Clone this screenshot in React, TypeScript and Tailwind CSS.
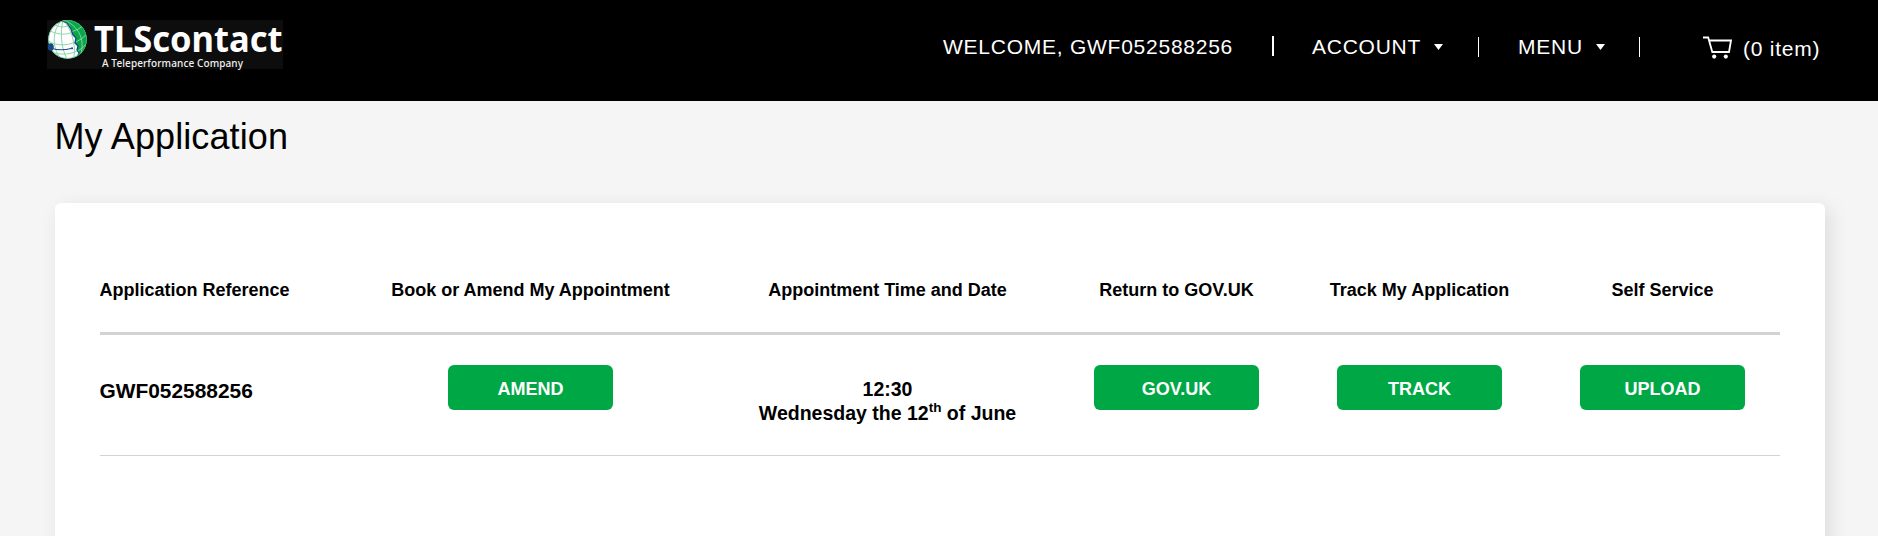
import type { ReactNode } from "react";

const COLUMNS = "grid grid-cols-[245px_371px_343px_235px_251px_235px]";

function Logo() {
  return (
    <svg className="h-[49px] w-[236px] overflow-visible bg-[#0d0d0d] tracking-normal" viewBox="0 0 236 49" role="img" aria-label="TLScontact">
      <defs>
        <clipPath id="globe">
          <circle cx="20.5" cy="19.5" r="19.4" />
        </clipPath>
      </defs>
      <g clipPath="url(#globe)">
        <circle cx="20.5" cy="19.5" r="19.5" fill="#fff" />
        <path d="M13 -1L20 3L24 9L26 15L29 18L28 23L31 26L30 30L32 33L30 40H42V-1Z" fill="#0aa64a" />
        <g fill="none" stroke="#7ed3a2" strokeWidth="0.9">
          <path d="M15 0C5 10 5 27 13 38M16 0C13 12 14 28 20 39M16 0C24 8 29 24 27 37" />
          <path d="M3 11C12 15 20 15 26 12M1 21C10 26 20 26 28 22M4 32C13 35 22 35 30 31M8 5C14 8 19 7 23 5" />
        </g>
        <g fill="none" stroke="#8fd9ae" strokeWidth="0.9">
          <path d="M17 0C31 6 38 18 34 34M24 12Q31 10 36 6M29 22Q35 19 39 15M31 31Q36 28 39 24" />
        </g>
        <path d="M15 1L20 3L24 9L26 15L29 18L28 23L31 26L30 30L32 33L30 38" fill="none" stroke="#164a87" strokeWidth="1.3" strokeLinejoin="round" />
        <circle cx="20.5" cy="19.5" r="19" fill="none" stroke="#3cb56d" strokeWidth="0.8" />
      </g>
      <path d="M5 28.5Q14 31 24 28.5" fill="none" stroke="#164a87" strokeWidth="1.1" />
      <ellipse cx="3.8" cy="27" rx="3" ry="3.8" fill="#164a87" />
      <circle cx="25" cy="28.3" r="1.1" fill="#164a87" />
      <text x="47" y="32" textLength="188.5" lengthAdjust="spacingAndGlyphs" fill="#fff" className="font-['Noto_Sans',sans-serif] text-[35px] font-bold">
        TLScontact
      </text>
      <text x="55" y="46.5" textLength="141" lengthAdjust="spacing" fill="#f0f0f0" className="font-['Noto_Sans',sans-serif] text-[10px] font-medium">
        A Teleperformance Company
      </text>
    </svg>
  );
}

function Caret() {
  return (
    <svg className="ml-[13px] h-[6px] w-[9px]" viewBox="0 0 9 6" fill="#fff">
      <path d="M0 0H9L4.5 6Z" />
    </svg>
  );
}

function CartIcon() {
  return (
    <svg className="h-[23px] w-[29px]" viewBox="0 0 29 23">
      <path d="M0 1.5H5.2L9.3 16H26L28 4.5H6.3" fill="none" stroke="#fff" strokeWidth="1.8" />
      <circle cx="11.2" cy="20.6" r="2.1" fill="#fff" />
      <circle cx="22.8" cy="20.6" r="2.1" fill="#fff" />
    </svg>
  );
}

function ActionButton({ children }: { children: ReactNode }) {
  return (
    <button className="h-[45px] w-[165px] rounded-[6px] bg-[#00a845] pt-[2px] text-[18px] leading-none font-bold text-white">
      {children}
    </button>
  );
}

export default function App() {
  return (
    <div className="flex h-[536px] flex-col overflow-hidden bg-[#f5f5f5] font-['Liberation_Sans',Arial,sans-serif] text-black">
      <header className="flex h-[101px] shrink-0 items-start bg-black pt-5 pl-[47px] text-[21px] leading-6 tracking-[0.75px] text-white">
        <Logo />
        <nav className="mt-[15px] ml-[660px] flex h-6 items-center whitespace-nowrap">
          <span className="w-[329px]">WELCOME, GWF052588256</span>
          <span className="-mt-[2px] h-5 w-[2px] bg-white" />
          <a className="ml-[38px] flex w-[166px] items-center">ACCOUNT<Caret /></a>
          <span className="h-5 w-px bg-white" />
          <a className="ml-[39px] flex w-[121px] items-center">MENU<Caret /></a>
          <span className="h-5 w-px bg-white" />
          <a className="ml-[63px] flex items-center gap-[11px]">
            <CartIcon />
            <span className="mt-[4px]">(0 item)</span>
          </a>
        </nav>
      </header>
      <main className="px-[55px]">
        <h1 className="-ml-[0.5px] flex h-[102px] items-start pt-[14px] text-[36px] leading-[44px] tracking-[0.1px]">My Application</h1>
        <section className="mr-[-2px] h-[400px] w-[1770px] rounded-[6px] bg-white px-[45px] pt-[62px] shadow-[5px_5px_20px_rgba(0,0,0,0.1)]">
          <div className={`${COLUMNS} h-[70px] border-b-[3px] border-[#d3d3d3] pt-[15px] text-center text-[18px] leading-5 font-bold whitespace-nowrap`}>
            <span className="-ml-[0.5px] text-left">Application Reference</span>
            <span>Book or Amend My Appointment</span>
            <span>Appointment Time and Date</span>
            <span>Return to GOV.UK</span>
            <span>Track My Application</span>
            <span>Self Service</span>
          </div>
          <div className={`${COLUMNS} h-[121px] justify-items-center border-b border-[#d3d3d3] pt-[30px] font-bold whitespace-nowrap`}>
            <span className="-ml-[0.5px] justify-self-start pt-[14px] text-[20.9px] leading-6">GWF052588256</span>
            <ActionButton>AMEND</ActionButton>
            <div className="pt-[12px] text-center text-[19.5px] leading-6">
              <div>12:30</div>
              <div>
                Wednesday the 12<sup className="top-[-0.6em] text-[13.5px]">th</sup> of June
              </div>
            </div>
            <ActionButton>GOV.UK</ActionButton>
            <ActionButton>TRACK</ActionButton>
            <ActionButton>UPLOAD</ActionButton>
          </div>
        </section>
      </main>
    </div>
  );
}
